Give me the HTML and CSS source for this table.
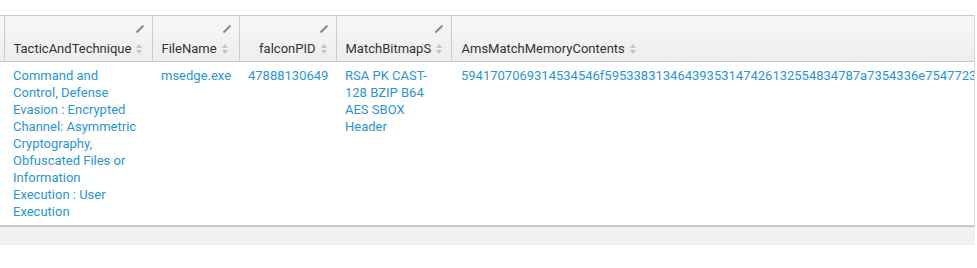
FILE: index.html
```html
<!DOCTYPE html>
<html>
<head>
<meta charset="utf-8">
<link rel="stylesheet" href="styles.css">
</head>
<body>
<div class="page">
  <div class="scroller">
    <table class="grid">
      <colgroup>
        <col class="c-stub">
        <col class="c-tactic">
        <col class="c-file">
        <col class="c-pid">
        <col class="c-bitmap">
        <col class="c-ams">
      </colgroup>
      <thead>
        <tr>
          <th class="stub"></th>
          <th><div class="hd"><span class="pencil"></span><span class="lbl">TacticAndTechnique<span class="sort"></span></span></div></th>
          <th><div class="hd"><span class="pencil"></span><span class="lbl">FileName<span class="sort"></span></span></div></th>
          <th class="num"><div class="hd"><span class="pencil"></span><span class="lbl">falconPID<span class="sort"></span></span></div></th>
          <th><div class="hd"><span class="pencil"></span><span class="lbl">MatchBitmapS<span class="sort"></span></span></div></th>
          <th class="wide"><div class="hd"><span class="pencil blank"></span><span class="lbl">AmsMatchMemoryContents<span class="sort"></span></span></div></th>
        </tr>
      </thead>
      <tbody>
        <tr>
          <td class="stub"></td>
          <td class="tactic">Command and Control, Defense Evasion : Encrypted Channel: Asymmetric Cryptography, Obfuscated Files or Information Execution : User Execution</td>
          <td>msedge.exe</td>
          <td class="num">47888130649</td>
          <td>RSA PK CAST-128 BZIP B64 AES SBOX Header</td>
          <td class="wide">5941707069314534546f59533831346439353147426132554834787a7354336e754772336b4e6a4d7a5a4731484e5a57356c4d6a</td>
        </tr>
      </tbody>
    </table>
  </div>
  <div class="hscroll"></div>
</div>
</body>
</html>
```

FILE: styles.css
```css
html, body {
  margin: 0;
  padding: 0;
  background: #ffffff;
}

body {
  font-family: Roboto, "Liberation Sans", Arial, sans-serif;
  font-size: 13px;
  color: #333333;
}

.page {
  width: 975px;
  padding-top: 15px;
}

.scroller {
  width: 975px;
  overflow: hidden;
  border-right: 1px solid #d6d6d6;
  box-sizing: border-box;
}

.grid {
  border-collapse: collapse;
  table-layout: fixed;
  width: 1400px;
}

.c-stub { width: 4px; }
.c-tactic { width: 148px; }
.c-file { width: 87px; }
.c-pid { width: 97px; }
.c-bitmap { width: 115px; }
.c-ams { width: 949px; }

.grid th {
  background: linear-gradient(#f7f7f7, #ededed);
  border-top: 1px solid #c6c6c6;
  border-bottom: 1px solid #c6c6c6;
  border-left: 1px solid #cccccc;
  padding: 0;
  font-weight: normal;
  text-align: left;
  vertical-align: top;
}

.grid th.stub {
  border-left: none;
}

.hd {
  display: flex;
  flex-direction: column;
  padding: 9px 8px 4px 9px;
  height: 32px;
}

.num .hd {
  align-items: flex-end;
}

.pencil {
  align-self: flex-end;
  width: 8px;
  height: 8px;
  margin-bottom: 7px;
  position: relative;
}

.pencil::before {
  content: "";
  position: absolute;
  left: 3px;
  top: -1px;
  width: 2px;
  height: 10px;
  background: #8a8a8a;
  transform: rotate(45deg);
  border-radius: 1px 1px 0 0;
}

.pencil.blank::before {
  display: none;
}

.lbl {
  display: flex;
  align-items: center;
  line-height: 17px;
  color: #333333;
  white-space: nowrap;
}

.sort {
  display: inline-flex;
  flex-direction: column;
  justify-content: center;
  gap: 2px;
  margin-left: 5px;
  width: 7px;
  height: 10px;
}

.sort::before,
.sort::after {
  content: "";
  display: block;
  width: 0;
  height: 0;
  border-left: 3px solid transparent;
  border-right: 3px solid transparent;
}

.sort::before {
  border-bottom: 4px solid #c2c2c2;
}

.sort::after {
  border-top: 4px solid #c2c2c2;
}

.grid td {
  padding: 5px 9px 5px 9px;
  line-height: 17px;
  color: #2b95cf;
  vertical-align: top;
  border-bottom: 2px solid #c9c9c9;
}

.grid td.tactic {
  padding-right: 14px;
}

.grid td.num {
  text-align: right;
  padding-right: 10px;
}

.grid td.wide {
  white-space: nowrap;
  padding-left: 10px;
}

.grid th.wide .hd {
  padding-left: 10px;
}

.hscroll {
  height: 18px;
  background: #f0f0f0;
  width: 975px;
}
```
